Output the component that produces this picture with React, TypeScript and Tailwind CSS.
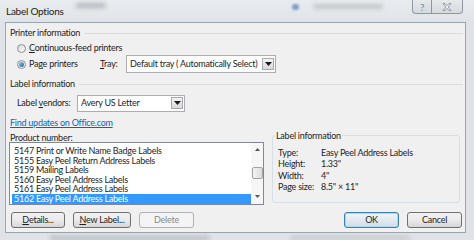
import React from 'react';

const products = [
  '5147 Print or Write Name Badge Labels',
  '5155 Easy Peel Return Address Labels',
  '5159 Mailing Labels',
  '5160 Easy Peel Address Labels',
  '5161 Easy Peel Address Labels',
  '5162 Easy Peel Address Labels',
];

const details = [
  ['Type:', 'Easy Peel Address Labels'],
  ['Height:', '1.33"'],
  ['Width:', '4"'],
  ['Page size:', '8.5" \u00d7 11"'],
];

function Radio({ checked }: { checked?: boolean }) {
  return (
    <span className="flex h-[9px] w-[9px] shrink-0 items-center justify-center rounded-full border border-[#8c8f94] bg-linear-to-br from-[#d6d8db] to-[#fbfbfb]">
      {checked && <span className="h-[5px] w-[5px] rounded-full bg-linear-to-br from-[#8fd0f3] to-[#1a5f94]" />}
    </span>
  );
}

function DropArrow() {
  return (
    <svg width="7" height="4" viewBox="0 0 7 4">
      <path d="M0 0h7L3.5 4z" fill="#1a1a1a" />
    </svg>
  );
}

function Combo({ value, className }: { value: string; className: string }) {
  return (
    <div className={`flex items-center border border-[#abadb3] bg-white pl-[3px] pr-[1px] ${className}`}>
      <span className="flex-1 overflow-hidden whitespace-nowrap leading-[12px]">{value}</span>
      <span className="flex h-[12px] w-[12px] shrink-0 items-center justify-center border border-[#a7abb0] bg-linear-to-b from-[#f3f3f3] to-[#d9d9d9]">
        <DropArrow />
      </span>
    </div>
  );
}

function Header({ children }: { children: React.ReactNode }) {
  return (
    <div className="flex h-[12px] items-center pl-[4px] pr-[2px]">
      <span className="leading-[12px]">{children}</span>
      <span className="ml-[4px] h-px flex-1 bg-[#dcdcdc]" />
    </div>
  );
}

function Button({ children, className, disabled, primary }: { children: React.ReactNode; className: string; disabled?: boolean; primary?: boolean }) {
  const tone = disabled
    ? 'border-[#adb2b5] bg-[#f4f4f4] text-[#8a8a8a]'
    : primary
      ? 'border-[#3c7fb1] bg-linear-to-b from-[#f0f6fa] to-[#d3dde6] shadow-[inset_0_0_0_1px_#a8d8f5]'
      : 'border-[#707070] bg-linear-to-b from-[#f2f2f2] via-[#ebebeb] to-[#d6d6d6]';
  return (
    <div className={`flex h-[16px] items-center justify-center whitespace-nowrap rounded-[3px] border leading-[12px] ${tone} ${className}`}>
      {children}
    </div>
  );
}

export default function App() {
  return (
    <div className="h-[240px] w-[474px] overflow-hidden whitespace-nowrap bg-[#dfe3e7] font-['Lato',sans-serif] text-[9px] tracking-[-0.25px] text-[#1e1e1e]">
      {/* Title bar */}
      <div className="flex h-[22px] items-start bg-linear-to-b from-[#e9ecef] to-[#dfe3e7]">
        <span className="ml-[6px] mt-[5px] text-[10px] leading-[12px] text-[#222]">Label Options</span>
        <span className="ml-[12px] mt-[3px] h-[5px] w-[30px] rounded-full bg-[#b4b9bf] blur-[2px]" />
        <span className="ml-[186px] mt-[4px] h-[6px] w-[7px] rounded-full bg-[#7e9fc6] blur-[1px]" />
        <span className="ml-[14px] mt-[4px] h-[5px] w-[70px] rounded-full bg-[#c3c7cc] blur-[2px]" />
        <div className="ml-auto mr-[11px] flex">
          <div className="flex h-[14px] w-[20px] items-center justify-center rounded-bl-[4px] border border-t-0 border-[#8e98a3] bg-linear-to-b from-[#e6e9ec] to-[#d6dbe0] text-[10px] leading-[10px] text-[#7c838b]">
            ?
          </div>
          <div className="flex h-[14px] w-[31px] items-center justify-center rounded-br-[4px] border border-l-0 border-t-0 border-[#8e98a3] bg-linear-to-b from-[#e6e9ec] to-[#d6dbe0]">
            <svg width="10" height="8" viewBox="0 0 10 8">
              <path d="M1 0.5h2L5 2.7 7 0.5h2L6.2 4 9 7.5H7L5 5.3 3 7.5H1L3.8 4z" fill="#f4f4f4" stroke="#7f8790" strokeWidth="0.8" />
            </svg>
          </div>
        </div>
      </div>

      {/* Client area */}
      <div className="ml-[5px] h-[211px] w-[461px] border border-[#9aa4ae] bg-[#f0f0f0]">
        <div className="mt-[4px]">
          <Header>Printer information</Header>
        </div>
        <div className="mt-[2px] flex h-[14px] items-center pl-[11px]">
          <Radio />
          <span className="ml-[3px] leading-[12px]">
            <span className="underline">C</span>ontinuous-feed printers
          </span>
        </div>
        <div className="flex h-[18px] items-center pl-[11px]">
          <Radio checked />
          <span className="ml-[3px] w-[71px] leading-[12px]">
            Pa<span className="underline">g</span>e printers
          </span>
          <span className="w-[26px] leading-[12px]">
            <span className="underline">T</span>ray:
          </span>
          <Combo value="Default tray ( Automatically Select)" className="h-[18px] w-[150px]" />
        </div>

        <div className="mt-[5px]">
          <Header>Label information</Header>
        </div>
        <div className="mt-[4px] flex h-[18px] items-center pl-[11px]">
          <span className="w-[60px] leading-[12px]">
            Label <span className="underline">v</span>endors:
          </span>
          <Combo value="Avery US Letter" className="h-[17px] w-[108px]" />
        </div>
        <div className="mt-[5px] h-[12px] pl-[4px] leading-[12px] text-[#0066cc] underline">Find updates on Office.com</div>

        <div className="mt-[2px] flex items-start">
          <div className="flex flex-col">
            <div className="h-[11px] pl-[4px] leading-[13px]">
              Product n<span className="underline">u</span>mber:
            </div>
            <div className="ml-[3px] flex h-[63px] w-[255px] border border-[#828790] bg-white">
              <div className="flex flex-1 flex-col pl-[2px] pt-[3px]">
                {products.map((p, i) => (
                  <div
                    key={p}
                    className={`h-[9.6px] pl-[2px] leading-[9.6px] ${i === products.length - 1 ? 'bg-[#3399ff] text-white' : ''}`}
                  >
                    {p}
                  </div>
                ))}
              </div>
              {/* Scrollbar */}
              <div className="flex w-[12px] flex-col items-center bg-[#f6f6f6]">
                <svg className="mt-[5px]" width="5" height="3" viewBox="0 0 5 3">
                  <path d="M0 3h5L2.5 0z" fill="#555" />
                </svg>
                <div className="mt-[16px] h-[12px] w-[11px] rounded-[2px] border border-[#a0a4a8] bg-linear-to-r from-[#f4f4f4] to-[#dcdcdc]" />
                <svg className="mt-[16px]" width="5" height="3" viewBox="0 0 5 3">
                  <path d="M0 0h5L2.5 3z" fill="#555" />
                </svg>
              </div>
            </div>
          </div>

          {/* Label information group */}
          <div className="ml-[8px] mt-[4px] h-[68px] w-[188px] rounded-[3px] border border-[#d5dfe5]">
            <div className="-mt-[6px] ml-[2px] w-fit bg-[#f0f0f0] px-[1px] leading-[12px]">Label information</div>
            <div className="mt-[5px] pl-[5px]">
              {details.map(([k, v]) => (
                <div key={k} className="flex h-[11.3px] items-center leading-[11.3px]">
                  <span className="w-[43px]">{k}</span>
                  <span>{v}</span>
                </div>
              ))}
            </div>
          </div>
        </div>

        {/* Buttons */}
        <div className="mt-[7px] flex pl-[5px] pr-[3px]">
          <Button className="w-[54px]">
            <span className="underline">D</span>etails...
          </Button>
          <Button className="ml-[8px] w-[58px]">
            <span className="underline">N</span>ew Label...
          </Button>
          <Button className="ml-[8px] w-[55px]" disabled>
            Delete
          </Button>
          <Button className="ml-auto w-[55px]" primary>
            OK
          </Button>
          <Button className="ml-[8px] w-[55px]">Cancel</Button>
        </div>
      </div>

      {/* Below window */}
      <div className="mt-[3px] flex h-[4px]">
        <span className="ml-[50px] h-[4px] w-[160px] rounded-full bg-[#b7bbc0] blur-[2px]" />
        <span className="ml-[80px] h-[4px] w-[120px] rounded-full bg-[#c4c8cc] blur-[2px]" />
      </div>
    </div>
  );
}
